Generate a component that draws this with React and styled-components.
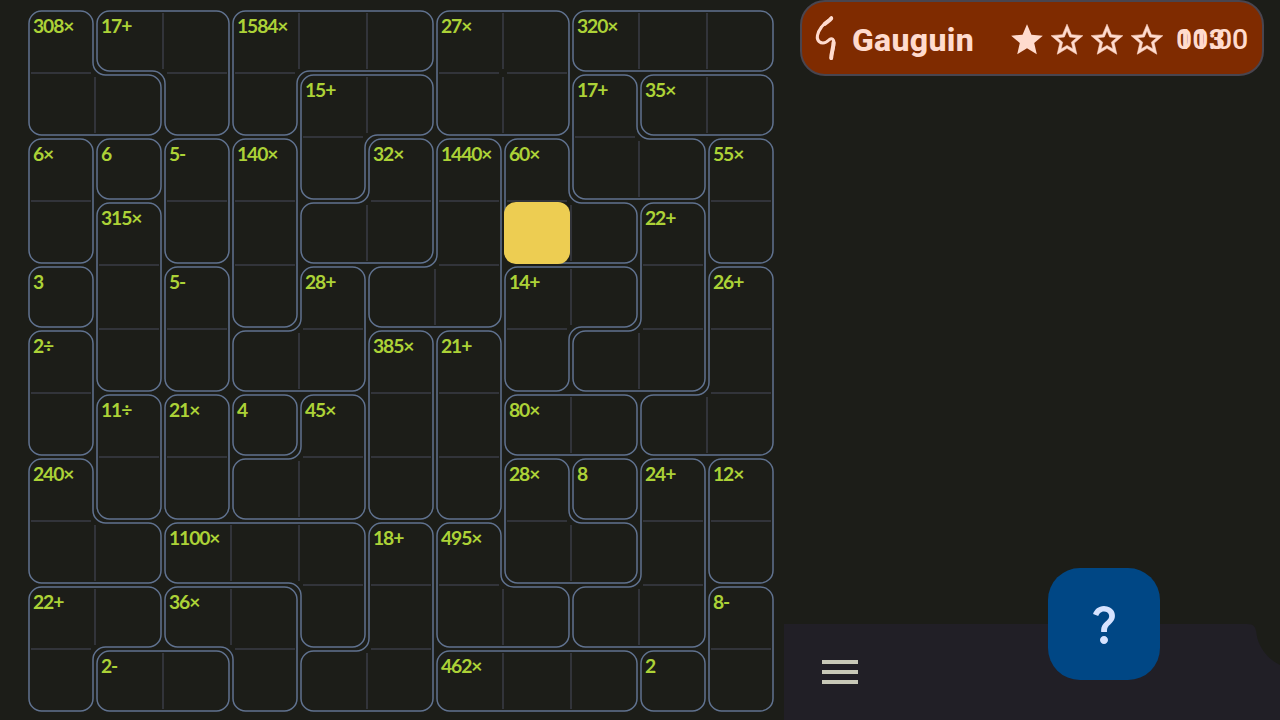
import React from "react";
import styled, { createGlobalStyle } from "styled-components";

const GlobalStyle = createGlobalStyle`
  * { box-sizing: border-box; }
  body { margin: 0; background: #1c1d18; overflow: hidden; }
`;

const CELL_W = 68;
const CELL_H = 64;
const RADIUS = 12.5;

/* One letter per cell: neighbouring cells with the same letter form a cage. */
const CAGES = [
  "ABBCCCDDEEE",
  "AABCFFDDGHH",
  "IJKLFMNOGGP",
  "IQKLMMNOORP",
  "SQTLUNNVVRW",
  "XQTUUYZVRRW",
  "XabcdYZeeWW",
  "fabddYZghij",
  "ffkkklmggij",
  "nnooklmmiip",
  "nqqollrrrsp",
];

const TARGETS = {
  A: "308×", B: "17+", C: "1584×", D: "27×", E: "320×", F: "15+", G: "17+", H: "35×",
  I: "6×", J: "6", K: "5-", L: "140×", M: "32×", N: "1440×", O: "60×", P: "55×",
  Q: "315×", R: "22+", S: "3", T: "5-", U: "28+", V: "14+", W: "26+", X: "2÷",
  Y: "385×", Z: "21+", a: "11÷", b: "21×", c: "4", d: "45×", e: "80×", f: "240×",
  g: "28×", h: "8", i: "24+", j: "12×", k: "1100×", l: "18+", m: "495×", n: "22+",
  o: "36×", p: "8-", q: "2-", r: "462×", s: "2",
};

const at = (r, c) => (CAGES[r] && CAGES[r][c]) || null;

/* The target is written in the first cell of a cage, in reading order. */
function buildCells() {
  const seen = new Set();
  return CAGES.flatMap((row, r) =>
    [...row].map((id, c) => {
      const label = seen.has(id) ? null : TARGETS[id];
      seen.add(id);
      return { key: `${r}-${c}`, label, selected: r === 3 && c === 7 };
    })
  );
}

/* Walks the border of a cage clockwise and returns a path with rounded corners. */
function outline(id) {
  const edges = new Map();
  const add = (x1, y1, x2, y2, dir, pos) => edges.set(`${x1},${y1}`, { to: `${x2},${y2}`, dir, pos });
  CAGES.forEach((row, r) =>
    [...row].forEach((cell, c) => {
      if (cell !== id) return;
      if (at(r - 1, c) !== id) add(c, r, c + 1, r, "h", 11 + r * CELL_H);
      if (at(r, c + 1) !== id) add(c + 1, r, c + 1, r + 1, "v", 93 + c * CELL_W);
      if (at(r + 1, c) !== id) add(c + 1, r + 1, c, r + 1, "h", 71 + r * CELL_H);
      if (at(r, c - 1) !== id) add(c, r + 1, c, r, "v", 29 + c * CELL_W);
    })
  );
  const first = edges.keys().next().value;
  const loop = [];
  let key = first;
  do {
    const edge = edges.get(key);
    loop.push(edge);
    key = edge.to;
  } while (key !== first);

  const corners = [];
  loop.forEach((edge, i) => {
    const next = loop[(i + 1) % loop.length];
    if (edge.dir !== next.dir) {
      corners.push(edge.dir === "h" ? [next.pos, edge.pos] : [edge.pos, next.pos]);
    }
  });

  const toward = (from, to) => {
    const len = Math.hypot(to[0] - from[0], to[1] - from[1]);
    return [from[0] + ((to[0] - from[0]) * RADIUS) / len, from[1] + ((to[1] - from[1]) * RADIUS) / len];
  };
  return (
    corners
      .map((p, i) => {
        const prev = corners[(i + corners.length - 1) % corners.length];
        const next = corners[(i + 1) % corners.length];
        const a = toward(p, prev);
        const b = toward(p, next);
        const cross = (p[0] - prev[0]) * (next[1] - p[1]) - (p[1] - prev[1]) * (next[0] - p[0]);
        return `${i ? "L" : "M"}${a} A${RADIUS} ${RADIUS} 0 0 ${cross > 0 ? 1 : 0} ${b}`;
      })
      .join(" ") + "Z"
  );
}

function dividers() {
  let d = "";
  CAGES.forEach((row, r) =>
    [...row].forEach((cell, c) => {
      if (at(r, c + 1) === cell) d += `M${95 + c * CELL_W} ${13 + r * CELL_H}v56`;
      if (at(r + 1, c) === cell) d += `M${31 + c * CELL_W} ${73 + r * CELL_H}h60`;
    })
  );
  return d;
}

const Screen = styled.main`
  display: grid;
  grid-template-columns: 784px 496px;
  width: 1280px;
  height: 720px;
  background: #1c1d18;
`;

const Board = styled.section`
  position: relative;
  padding: 9px 9px 7px 27px;
`;

const Lines = styled.svg`
  position: absolute;
  inset: 0;
  pointer-events: none;
`;

const Cells = styled.div`
  display: grid;
  grid-template-columns: repeat(11, ${CELL_W}px);
  grid-auto-rows: ${CELL_H}px;
`;

const Cell = styled.div`
  position: relative;
  z-index: ${(p) => (p.$selected ? 1 : 0)};
  margin: 1px;
  padding: 4px 0 0 5px;
  border-radius: 12px;
  background: ${(p) => (p.$selected ? "#edcd52" : "transparent")};
`;

const Target = styled.span`
  display: block;
  width: max-content;
  font: 700 19.3px/23px Lato, sans-serif;
  letter-spacing: -1.12px;
  color: #acd237;
`;

const Side = styled.aside`
  display: flex;
  flex-direction: column;
  justify-content: space-between;
`;

const Header = styled.header`
  display: flex;
  align-items: center;
  height: 76px;
  margin: 0 16px;
  padding: 0 14px 0 11px;
  border: 2px solid #49454f;
  border-radius: 25px;
  background: #7f2b00;
  color: #ffdbce;
`;

const Title = styled.h1`
  flex: 1;
  margin: 0 0 0 11px;
  padding-top: 3px;
  font: 800 32px/38px Roboto, sans-serif;
  letter-spacing: 0.3px;
`;

const Stars = styled.div`
  display: flex;
  gap: 2px;
  margin-right: 10px;
  padding-top: 3px;
`;

const Timer = styled.div`
  display: grid;
  width: 72px;
  padding-top: 3px;
  font: 500 28.5px/34px Roboto, sans-serif;
`;

const Digits = styled.span`
  grid-area: 1 / 1;
  font-weight: ${(p) => (p.$strong ? 700 : 500)};
`;

const BottomBar = styled.footer`
  position: relative;
  display: flex;
  align-items: center;
  height: 96px;
  padding-left: 32px;
`;

const BarSurface = styled.div`
  position: absolute;
  inset: 0;
  background: #211f26;
  clip-path: path("M0 0H463C470 0 472 3 472.700 11C475 24 484 35 496 41V96H0Z");
`;

const MenuButton = styled.button`
  position: relative;
  display: flex;
  padding: 0;
  border: 0;
  background: none;
  color: #c8c8b7;
`;

const HintButton = styled.button`
  position: absolute;
  top: -56px;
  left: 264px;
  display: grid;
  place-items: center;
  width: 112px;
  height: 112px;
  padding: 0;
  border: 0;
  border-radius: 32px;
  background: #004785;
  color: #d6e3ff;
`;

const STAR = "M12 17.27L18.18 21l-1.64-7.03L22 9.24l-7.19-.61L12 2 9.19 8.63 2 9.24l5.46 4.73L5.82 21z";
const STAR_OUTLINE =
  "M22 9.24l-7.19-.62L12 2 9.19 8.63 2 9.24l5.46 4.73L5.82 21 12 17.27 18.18 21l-1.63-7.03L22 9.24zM12 15.4l-3.76 2.27 1-4.28-3.32-2.88 4.38-.38L12 6.1l1.71 4.04 4.38.38-3.32 2.88 1 4.28L12 15.4z";

function Icon({ d, size, weight = 0 }) {
  return (
    <svg width={size} height={size} viewBox="0 0 24 24" fill="currentColor" stroke="currentColor" strokeWidth={weight}>
      <path d={d} />
    </svg>
  );
}

function Logo() {
  return (
    <svg width="28" height="48" viewBox="0 0 28 48" fill="none" stroke="currentColor" strokeLinecap="round" strokeLinejoin="round">
      <path strokeWidth="3" d="M18.500 3.700C16 7 12 8 8.500 13C4 19 3 25 6 27.500C9 30 13 29 16.500 25.500C19 23.500 21 25.500 21 29C21 34 18.300 39 18.300 44.500" />
      <path strokeWidth="4" d="M18.200 4.500C17 6.500 14 8 12 9.800M20.500 28.500C20.500 34 18.300 39 18.200 44" />
    </svg>
  );
}

export default function App() {
  return (
    <Screen>
      <GlobalStyle />
      <Board>
        <Lines width="784" height="720" fill="none">
          <path d={dividers()} stroke="#32343a" strokeWidth="2" />
          {Object.keys(TARGETS).map((id) => (
            <path key={id} d={outline(id)} stroke="#60728f" strokeWidth="1.5" />
          ))}
        </Lines>
        <Cells>
          {buildCells().map((cell) => (
            <Cell key={cell.key} $selected={cell.selected}>
              {cell.label && <Target>{cell.label}</Target>}
            </Cell>
          ))}
        </Cells>
      </Board>
      <Side>
        <Header>
          <Logo />
          <Title>Gauguin</Title>
          <Stars>
            <Icon d={STAR} size={38} />
            <Icon d={STAR_OUTLINE} size={38} weight={0.35} />
            <Icon d={STAR_OUTLINE} size={38} weight={0.35} />
            <Icon d={STAR_OUTLINE} size={38} weight={0.35} />
          </Stars>
          <Timer>
            <Digits $strong>113</Digits>
            <Digits>00:00</Digits>
          </Timer>
        </Header>
        <BottomBar>
          <BarSurface />
          <MenuButton aria-label="Menu">
            <Icon size={48} d="M3 18h18v-2H3v2zm0-5h18v-2H3v2zm0-7v2h18V6H3z" />
          </MenuButton>
          <HintButton aria-label="Hint">
            <Icon
              size={48}
              d="M11.07 12.85c.77-1.39 2.25-2.21 3.11-3.44.91-1.29.4-3.7-2.18-3.7-1.69 0-2.52 1.28-2.87 2.34L6.54 6.96C7.25 4.83 9.18 3 11.99 3c2.35 0 3.96 1.07 4.78 2.41.7 1.15 1.11 3.3.03 4.9-1.2 1.77-2.35 2.31-2.97 3.45-.25.46-.35.76-.35 2.24h-2.89c-.01-.78-.13-2.05.48-3.15zM14 20c0 1.1-.9 2-2 2s-2-.9-2-2 .9-2 2-2 2 .9 2 2z"
            />
          </HintButton>
        </BottomBar>
      </Side>
    </Screen>
  );
}
